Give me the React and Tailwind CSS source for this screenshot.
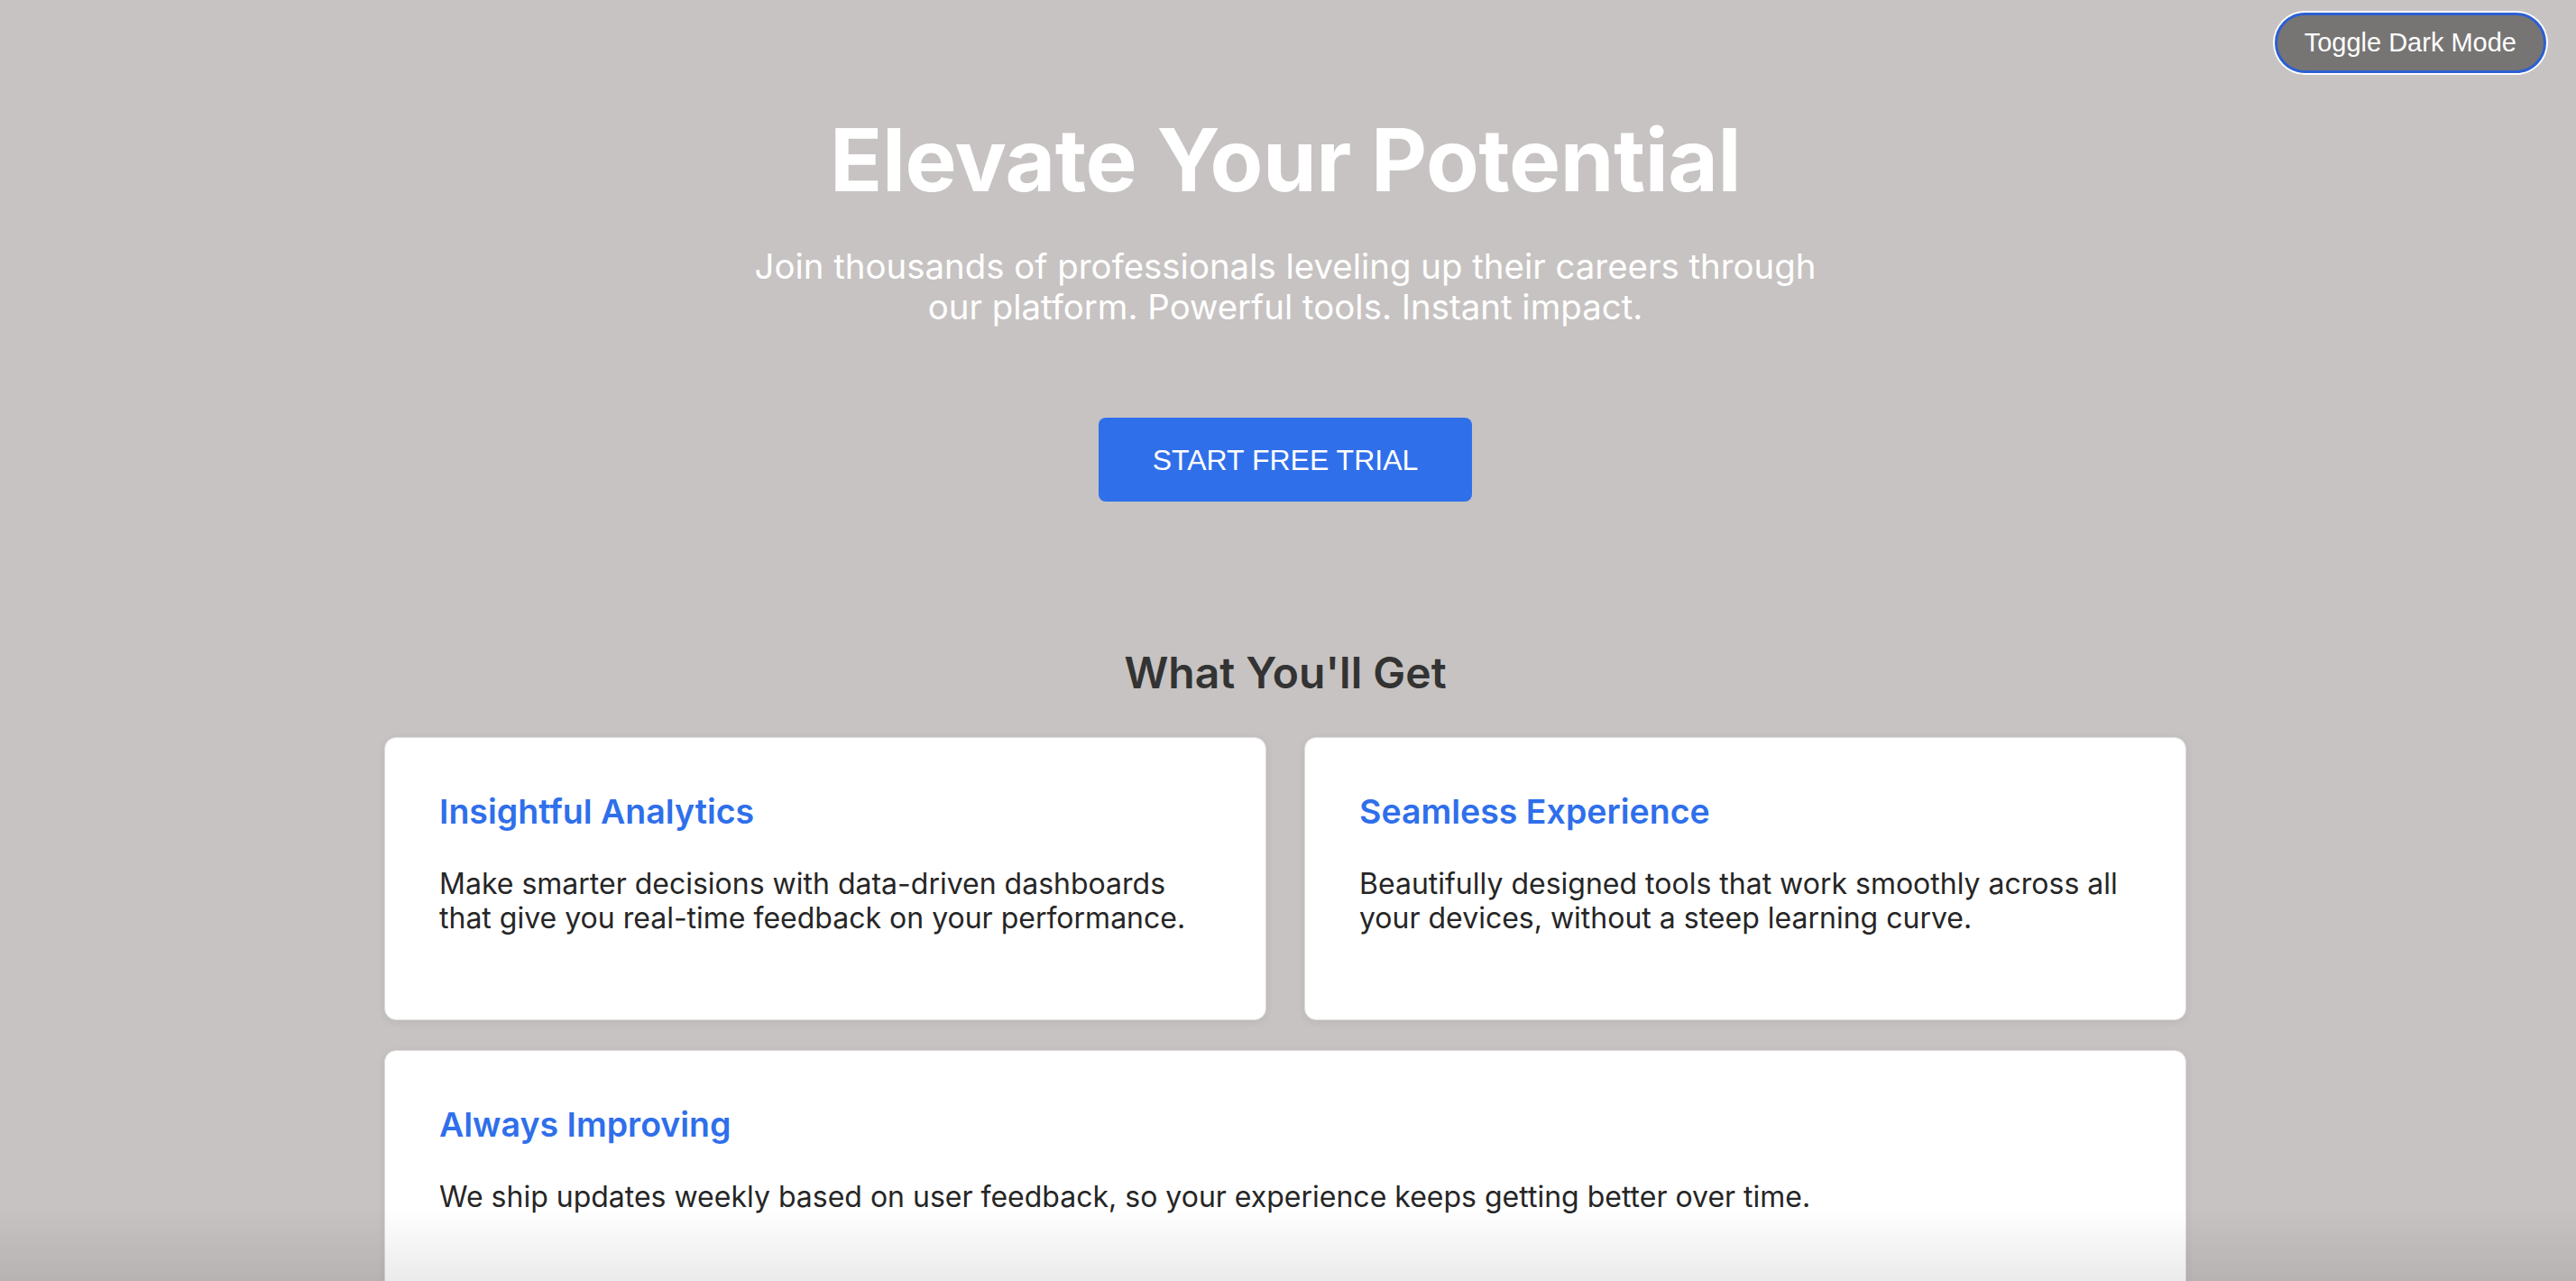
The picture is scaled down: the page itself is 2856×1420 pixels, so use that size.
import React from 'react';

const features = [
    {
        title: 'Insightful Analytics',
        text: 'Make smarter decisions with data-driven dashboards that give you real-time feedback on your performance.',
    },
    {
        title: 'Seamless Experience',
        text: 'Beautifully designed tools that work smoothly across all your devices, without a steep learning curve.',
    },
    {
        title: 'Always Improving',
        text: 'We ship updates weekly based on user feedback, so your experience keeps getting better over time.',
        wide: true,
    },
];

function FeatureCard({ title, text, wide }) {
    return (
        <div
            className={`bg-white border border-[#dcdcdc] rounded-[13px] p-[60px] shadow-[0_2px_10px_rgba(0,0,0,0.07)] ${wide ? 'col-span-2' : ''}`}
        >
            <h3 className="text-[37.5px] leading-[43px] font-semibold text-[#2f6feb]">{title}</h3>
            <p className="mt-[40px] mb-[32px] text-[32px] leading-[1.2] text-[#262626]">{text}</p>
        </div>
    );
}

export default function App() {
    return (
        <div className="min-h-screen bg-[#c7c3c2] font-['Inter','Noto_Sans',sans-serif] relative overflow-hidden">
            {/* Toggle */}
            <button className="absolute top-[14px] right-[33px] h-[67px] px-[30px] rounded-full bg-[#777574] border-[3px] border-[#2c60d2] ring-2 ring-white text-white text-[29px] font-['Liberation_Sans','Arial',sans-serif]">
                Toggle Dark Mode
            </button>

            <div className="pr-[6px] flex flex-col items-center">
                {/* Hero */}
                <h1 className="mt-[120px] text-[96px] leading-[1.2] font-bold text-white tracking-[-0.5px]">
                    Elevate Your Potential
                </h1>
                <p className="mt-[38px] max-w-[1200px] text-center text-[38.4px] leading-[45px] text-white">
                    Join thousands of professionals leveling up their careers through our platform. Powerful tools. Instant impact.
                </p>
                <button className="mt-[100px] w-[414px] h-[93px] rounded-[8px] bg-[#306fea] text-white text-[32px] font-['Liberation_Sans','Arial',sans-serif] flex items-center justify-center">
                    START FREE TRIAL
                </button>

                {/* Features */}
                <h2 className="mt-[161px] text-[48px] leading-[1.2] font-semibold text-[#333333]">
                    What You'll Get
                </h2>
                <div className="mt-[42px] w-[1998px] grid grid-cols-2 gap-x-[42px] gap-y-[33px] pb-[80px]">
                    {features.map((f) => (
                        <FeatureCard key={f.title} {...f} />
                    ))}
                </div>
            </div>

            {/* bottom fade */}
            <div className="fixed left-0 right-0 bottom-0 h-[80px] pointer-events-none bg-gradient-to-b from-transparent to-black/[0.08]" />
        </div>
    );
}
